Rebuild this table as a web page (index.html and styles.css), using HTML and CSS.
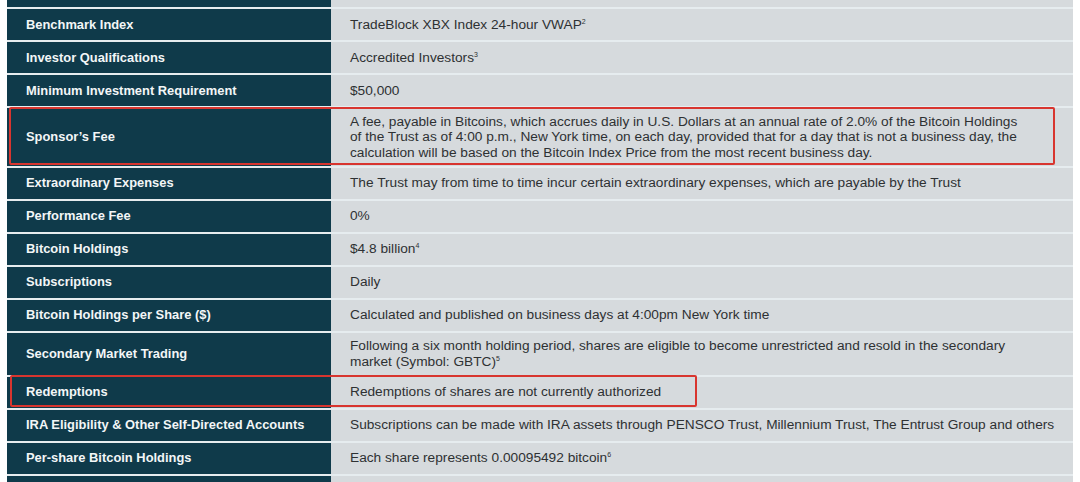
FILE: index.html
```html
<!DOCTYPE html>
<html lang="en">
<head>
    <meta charset="UTF-8">
    <meta name="viewport" content="width=device-width, initial-scale=1.0">
    <title>Bitcoin Trust Overview</title>
    <link rel="stylesheet" href="styles.css">
</head>
<body>
<div class="wrap">
    <table class="facts" cellspacing="0">
        <tr>
            <th>Investment Objective</th>
            <td>To reflect the value of Bitcoin held by the Trust, less expenses and other liabilities, typically</td>
        </tr>
        <tr>
            <th>Benchmark Index</th>
            <td>TradeBlock XBX Index 24-hour VWAP<sup>2</sup></td>
        </tr>
        <tr>
            <th>Investor Qualifications</th>
            <td>Accredited Investors<sup>3</sup></td>
        </tr>
        <tr>
            <th>Minimum Investment Requirement</th>
            <td>$50,000</td>
        </tr>
        <tr>
            <th>Sponsor’s Fee</th>
            <td>A fee, payable in Bitcoins, which accrues daily in U.S. Dollars at an annual rate of 2.0% of the Bitcoin Holdings<br>of the Trust as of 4:00 p.m., New York time, on each day, provided that for a day that is not a business day, the<br>calculation will be based on the Bitcoin Index Price from the most recent business day.</td>
        </tr>
        <tr>
            <th>Extraordinary Expenses</th>
            <td>The Trust may from time to time incur certain extraordinary expenses, which are payable by the Trust</td>
        </tr>
        <tr>
            <th>Performance Fee</th>
            <td>0%</td>
        </tr>
        <tr>
            <th>Bitcoin Holdings</th>
            <td>$4.8 billion<sup>4</sup></td>
        </tr>
        <tr>
            <th>Subscriptions</th>
            <td>Daily</td>
        </tr>
        <tr>
            <th>Bitcoin Holdings per Share ($)</th>
            <td>Calculated and published on business days at 4:00pm New York time</td>
        </tr>
        <tr>
            <th>Secondary Market Trading</th>
            <td>Following a six month holding period, shares are eligible to become unrestricted and resold in the secondary<br>market (Symbol: GBTC)<sup>5</sup></td>
        </tr>
        <tr>
            <th>Redemptions</th>
            <td>Redemptions of shares are not currently authorized</td>
        </tr>
        <tr>
            <th>IRA Eligibility &amp; Other Self-Directed Accounts</th>
            <td>Subscriptions can be made with IRA assets through PENSCO Trust, Millennium Trust, The Entrust Group and others</td>
        </tr>
        <tr>
            <th>Per-share Bitcoin Holdings</th>
            <td>Each share represents 0.00095492 bitcoin<sup>6</sup></td>
        </tr>
        <tr>
            <th>Fund Administrator</th>
            <td>BNY Mellon</td>
        </tr>
    </table>

    <!-- highlight boxes -->
    <div class="mark mark-fee"></div>
    <div class="mark mark-redeem"></div>
</div>
</body>
</html>
```

FILE: styles.css
```css
body {
    margin: 0;
    background: #fff;
    overflow: hidden;
}
.wrap {
    position: relative;
    margin: -25px 7px 0 7px;
}
.facts {
    width: 1066px;
    border-collapse: collapse;
    table-layout: fixed;
}
.facts th,
.facts td {
    height: 33px;
    box-sizing: border-box;
    border-bottom: 2px solid #e6ecef;
    padding: 5.5px 6px 5.5px 19px;
    line-height: 15.5px;
    vertical-align: middle;
    text-align: left;
}
.facts th {
    width: 324px;
    background: #0f3a4a;
    color: #f3f6f7;
    font-family: "Liberation Sans", Arial, sans-serif;
    font-weight: bold;
    font-size: 12.9px;
}
.facts td {
    background: #d6dadd;
    color: #2e3133;
    font-family: "Liberation Sans", Arial, sans-serif;
    font-size: 13.7px;
    white-space: nowrap;
}
.facts sup {
    font-size: 7px;
    line-height: 0;
    vertical-align: 5px;
}
.mark {
    position: absolute;
    border: 2px solid #d8352f;
    border-radius: 2px;
}
.mark-fee {
    left: 2px;
    top: 132px;
    width: 1042px;
    height: 54px;
}
.mark-redeem {
    left: 3px;
    top: 400px;
    width: 683px;
    height: 28px;
}
```
